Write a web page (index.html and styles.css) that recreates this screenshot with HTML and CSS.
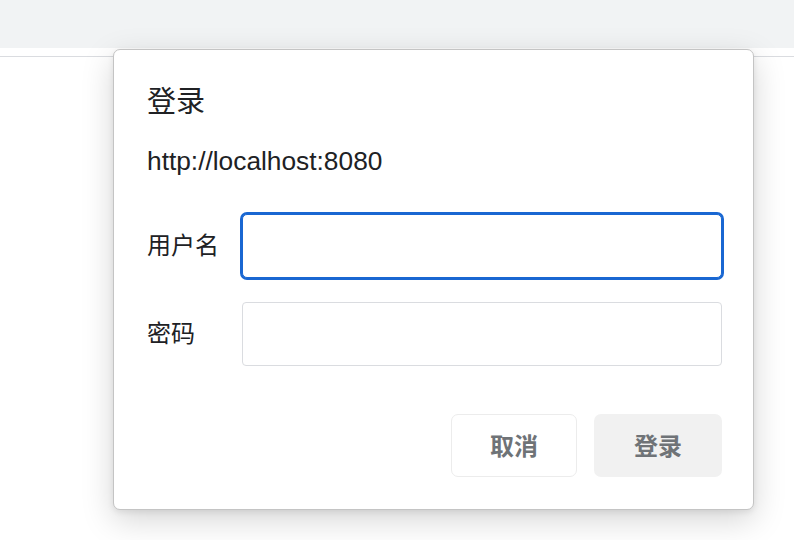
FILE: index.html
```html
<!DOCTYPE html>
<html lang="zh-CN">
<head>
<meta charset="utf-8">
<title>登录</title>
<link rel="stylesheet" href="styles.css">
</head>
<body>
<div class="topbar"></div>
<div class="page"></div>
<div class="dialog">
  <h1 class="title">登录</h1>
  <div class="origin">http://localhost:8080</div>
  <form class="form">
    <label class="row">
      <span class="label">用户名</span>
      <input class="field focused" type="text">
    </label>
    <label class="row">
      <span class="label">密码</span>
      <input class="field" type="password">
    </label>
    <div class="actions">
      <button type="button" class="btn btn-cancel">取消</button>
      <button type="button" class="btn btn-login">登录</button>
    </div>
  </form>
</div>
</body>
</html>
```
FILE: styles.css
```css
html, body {
  margin: 0;
  padding: 0;
  background: #ffffff;
  font-family: "Liberation Sans", "Noto Sans CJK SC", sans-serif;
  color: #202124;
}
body {
  width: 794px;
  height: 540px;
  overflow: hidden;
}
.topbar {
  height: 48px;
  background: #f1f3f4;
}
.page {
  margin-top: 8px;
  border-top: 1px solid #dadce0;
}
.dialog {
  position: absolute;
  left: 113px;
  top: 49px;
  width: 641px;
  height: 461px;
  box-sizing: border-box;
  border: 1px solid #c4c4c4;
  border-radius: 7px;
  background: #ffffff;
  box-shadow: 0 10px 32px rgba(0, 0, 0, 0.17), 0 2px 6px rgba(0, 0, 0, 0.08);
  padding: 34px 31px 0 33px;
}
.title {
  margin: 0;
  font-size: 29px;
  font-weight: normal;
  line-height: 36px;
  color: #202124;
}
.origin {
  margin-top: 25px;
  font-size: 26.3px;
  line-height: 32px;
  color: #202124;
}
.form {
  margin: 37px 0 0;
  display: flex;
  flex-direction: column;
  gap: 24px;
}
.row {
  display: flex;
  align-items: center;
}
.label {
  width: 95px;
  font-size: 24px;
  line-height: 32px;
  color: #202124;
}
.field {
  width: 480px;
  height: 64px;
  box-sizing: border-box;
  margin: 0;
  border: 1px solid #dadce0;
  border-radius: 4px;
  background: #ffffff;
  outline: none;
  font-size: 22px;
}
.field.focused {
  border-color: #1967d2;
  box-shadow: 0 0 0 2px #1967d2;
  border-radius: 5px;
}
.actions {
  display: flex;
  justify-content: flex-end;
  gap: 17px;
  margin-top: 24px;
}
.btn {
  height: 63px;
  box-sizing: border-box;
  margin: 0;
  padding: 0 0 2px;
  border-radius: 7px;
  font-family: "Liberation Sans", "Noto Sans CJK SC", sans-serif;
  font-size: 24px;
  font-weight: bold;
  color: #6f7377;
  cursor: pointer;
}
.btn-cancel {
  width: 126px;
  background: #ffffff;
  border: 1px solid #ececec;
}
.btn-login {
  width: 128px;
  background: #f1f1f1;
  border: none;
}
```
